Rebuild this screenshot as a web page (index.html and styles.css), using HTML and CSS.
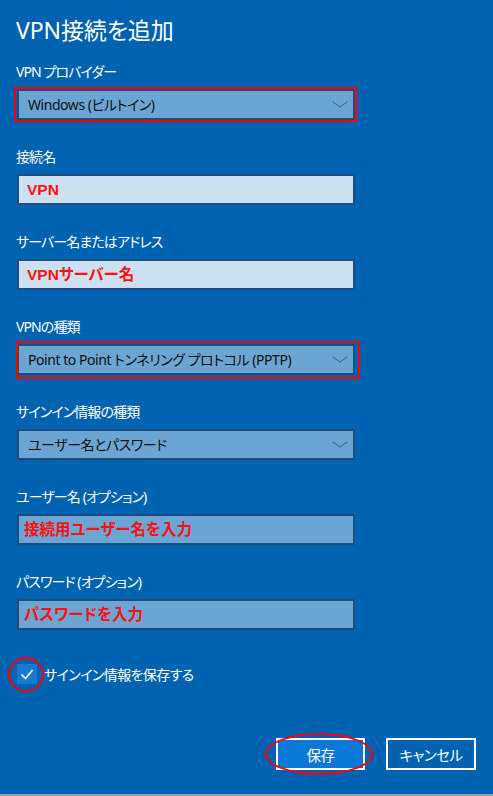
FILE: index.html
```html
<!DOCTYPE html>
<html lang="ja">
<head>
<meta charset="utf-8">
<title>VPN接続を追加</title>
<link rel="stylesheet" href="styles.css">
</head>
<body>
<div class="dialog">
  <h1 class="title">VPN接続を追加</h1>

  <div class="group">
    <div class="label">VPN プロバイダー</div>
    <div class="mark">
      <div class="select">Windows (ビルトイン)<span class="chev"></span></div>
      <span class="redbox box1"></span>
    </div>
  </div>

  <div class="group">
    <div class="label">接続名</div>
    <div class="input light"><span class="note">VPN</span></div>
  </div>

  <div class="group">
    <div class="label">サーバー名またはアドレス</div>
    <div class="input light"><span class="note">VPNサーバー名</span></div>
  </div>

  <div class="group">
    <div class="label">VPNの種類</div>
    <div class="mark">
      <div class="select">Point to Point トンネリング プロトコル (PPTP)<span class="chev"></span></div>
      <span class="redbox box2"></span>
    </div>
  </div>

  <div class="group">
    <div class="label">サインイン情報の種類</div>
    <div class="select">ユーザー名とパスワード<span class="chev"></span></div>
  </div>

  <div class="group">
    <div class="label">ユーザー名 (オプション)</div>
    <div class="input"><span class="note">接続用ユーザー名を入力</span></div>
  </div>

  <div class="group">
    <div class="label">パスワード (オプション)</div>
    <div class="input"><span class="note">パスワードを入力</span></div>
  </div>

  <div class="check-row">
    <span class="checkbox">
      <svg width="20" height="20" viewBox="0 0 20 20"><path d="M4.5 10.5 L8.5 14.5 L15.5 6" fill="none" stroke="#fff" stroke-width="1.6"/></svg>
      <span class="redcircle"></span>
    </span>
    <span class="check-text">サインイン情報を保存する</span>
  </div>

  <div class="buttons">
    <span class="btn-wrap">
      <button class="btn primary">保存</button>
      <span class="redoval"></span>
    </span>
    <button class="btn">キャンセル</button>
  </div>
</div>
</body>
</html>
```

FILE: styles.css
```css
* {box-sizing: border-box;}

body {
	margin: 0;
	background: #9aa3ab;
	font-family: "Noto Sans", "Noto Sans CJK JP", sans-serif;
	font-feature-settings: "palt";
	color: #fff;
}

.dialog {
	height: 794px;
	background: #0063b1;
	padding: 14px 16px 0 16px;
	overflow: hidden;
}

.title {
	margin: 0 0 16px 0;
	font-size: 23px;
	font-weight: normal;
	line-height: 32px;
	letter-spacing: -0.1px;
}

.group {
	margin-bottom: 27px;
}

.label {
	font-size: 14px;
	line-height: 20px;
	margin-bottom: 7px;
	letter-spacing: -0.9px;
}

.mark {
	position: relative;
}

.select, .input {
	margin-left: 1px;
	width: 338px;
	height: 31px;
	border: 2px solid #1c4d7e;
	background: #6aa5d3;
	color: #111;
	font-size: 14px;
	line-height: 27px;
	padding-left: 9px;
	position: relative;
	white-space: nowrap;
	letter-spacing: -0.45px;
}

.input {
	padding-left: 5px;
	letter-spacing: 0;
}

.input.light {
	background: #cde0ef;
	padding-left: 8px;
}

/* thin down-chevron on the right of each select */
.chev {
	position: absolute;
	right: 6px;
	top: 10px;
	width: 14px;
	height: 7px;
}

.chev::before, .chev::after {
	content: "";
	position: absolute;
	top: 3px;
	width: 9px;
	height: 1px;
	background: #3a6a96;
}

.chev::before {
	left: -1px;
	transform: rotate(35deg);
}

.chev::after {
	right: -1px;
	transform: rotate(-35deg);
}

.note {
	color: #ff1010;
	font-weight: bold;
	font-size: 15.5px;
	font-family: "Liberation Sans", "Noto Sans CJK JP", sans-serif;
}

/* red annotation marks drawn over the dialog */
.redbox {
	position: absolute;
	border: 2px solid #ff0000;
	pointer-events: none;
}

.box1 {
	left: -2px;
	top: -2px;
	width: 343px;
	height: 35px;
}

.box2 {
	left: 0px;
	top: -3px;
	width: 344px;
	height: 38px;
}

.check-row {
	display: flex;
	align-items: center;
	margin-top: 34px;
	margin-left: 1px;
	font-size: 14px;
	letter-spacing: -0.6px;
}

.checkbox {
	position: relative;
	width: 20px;
	height: 20px;
	background: #1a7ad0;
	margin-right: 7px;
}

.checkbox svg {
	display: block;
}

.redcircle {
	position: absolute;
	left: -9px;
	top: -7px;
	width: 36px;
	height: 35px;
	border: 2px solid #ff0000;
	border-radius: 50%;
}

.buttons {
	display: flex;
	justify-content: flex-end;
	gap: 21px;
	margin-top: 54px;
	margin-right: 1px;
}

.btn-wrap {
	position: relative;
}

.btn {
	width: 90px;
	height: 32px;
	border: 2px solid #fff;
	background: #0063b1;
	color: #fff;
	font-size: 14.5px;
	font-family: "Noto Sans", "Noto Sans CJK JP", sans-serif;
	font-feature-settings: "palt";
	letter-spacing: -0.5px;
	padding: 0;
}

.btn.primary {
	background: #0a78d7;
	width: 89px;
}

.redoval {
	position: absolute;
	left: -11px;
	top: -5px;
	width: 108px;
	height: 42px;
	border: 2px solid #ff0000;
	border-radius: 50%;
}
```
